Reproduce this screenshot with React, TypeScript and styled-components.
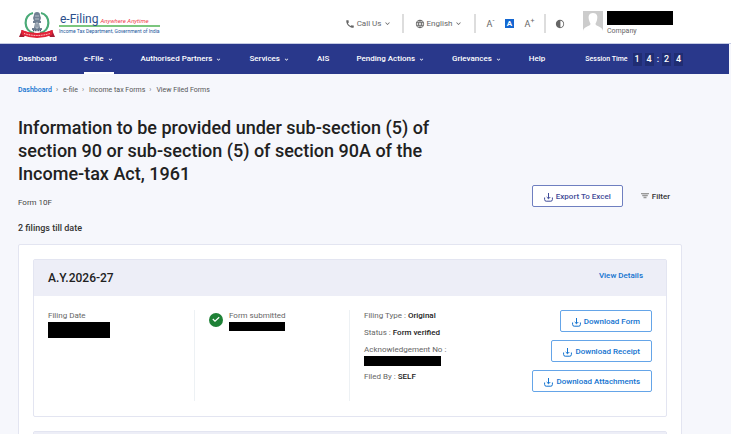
import React from "react";
import styled, { createGlobalStyle } from "styled-components";
import { MdCall, MdContrast, MdExpandMore, MdLanguage } from "react-icons/md";

const GlobalStyle = createGlobalStyle`
  * { box-sizing: border-box; }
  body { margin: 0; background: #f6f7fc; font-family: Roboto, "Liberation Sans", sans-serif; color: #212121; font-size: 8px; line-height: 12px; }
  button { font-family: inherit; cursor: pointer; }
  a { color: inherit; text-decoration: none; }
  h1, h2, p, ul, ol, dl, dd { margin: 0; padding: 0; }
  ul, ol { list-style: none; }
  svg { flex: none; display: block; }
`;

const Page = styled.div`
  min-height: 100vh;
  padding-right: 2px;
  overflow: hidden;
`;

const TopBar = styled.header`
  display: flex;
  align-items: center;
  height: 44px;
  margin-right: -2px;
  padding: 4px 58px 0 18px;
  background: #fff;
  border-bottom: 1px solid #c5cbe3;
`;

const Brand = styled.a`
  display: flex;
  align-items: center;
  gap: 3px;
  margin-right: auto;
`;

const BrandText = styled.span`
  display: flex;
  flex-direction: column;
`;

const BrandName = styled.span`
  display: flex;
  align-items: baseline;
  gap: 2px;
  padding-left: 1px;
  border-bottom: 2px solid #7cc67e;
  color: #2b4f8c;
  font: 12px/12px Roboto, sans-serif;
`;

const Tagline = styled.em`
  color: #f0404c;
  font: italic 6px/8px Roboto, sans-serif;
`;

const Department = styled.span`
  color: #24579b;
  font: 5px/8px Roboto, sans-serif;
  white-space: nowrap;
`;

const Tool = styled.button<{ $width: number }>`
  display: flex;
  align-items: center;
  justify-content: center;
  gap: 2px;
  width: ${(p) => p.$width}px;
  height: 18px;
  padding: 0;
  border: 0;
  background: none;
  color: #666;
  font-size: 8px;
  white-space: nowrap;
`;

const Separator = styled.span<{ $left: number; $right: number }>`
  width: 2px;
  height: 19px;
  margin: 0 ${(p) => p.$right}px 0 ${(p) => p.$left}px;
  background: #ddd;
`;

const SizeTool = styled(Tool)`
  gap: 0;
  font-size: 9px;
  sup { font-size: 7px; line-height: 7px; margin-bottom: 4px; vertical-align: 0; }
`;

const ActiveSize = styled.span`
  width: 9px;
  height: 9px;
  background: #1467d1;
  color: #fff;
  font: bold 8px/9px Roboto, sans-serif;
`;

const Account = styled.div`
  display: flex;
  gap: 4px;
  margin-left: 18px;
`;

const AccountText = styled.div`
  display: flex;
  flex-direction: column;
  color: #666;
  font-size: 7px;
`;

const Redacted = styled.span<{ $width: number; $height: number }>`
  display: block;
  width: ${(p) => p.$width}px;
  height: ${(p) => p.$height}px;
  background: #000;
`;

const NavBar = styled.nav`
  display: flex;
  align-items: center;
  justify-content: space-between;
  height: 30px;
  padding: 0 46px 0 18px;
  background: #29388b;
  color: #fff;
  font-weight: 500;
`;

const NavList = styled.ul`
  display: flex;
  gap: 27px;
`;

const NavLink = styled.a<{ $active?: boolean }>`
  display: flex;
  align-items: center;
  gap: 3px;
  height: 30px;
  padding-top: 2px;
  border-bottom: 2px solid ${(p) => (p.$active ? "#fff" : "transparent")};
  white-space: nowrap;
`;

const Session = styled.div`
  display: flex;
  align-items: center;
  gap: 4px;
  font-size: 7px;
  white-space: nowrap;
`;

const Timer = styled.span`
  display: flex;
  gap: 3px;
  margin-left: 1px;
  font: 500 9px/13px Roboto, sans-serif;
`;

const Digit = styled.span`
  width: 9px;
  background: #202d73;
  text-align: center;
`;

const Main = styled.main`
  padding: 10px 47px 0 18px;
`;

const Crumbs = styled.ol`
  display: flex;
  gap: 5px;
  font-size: 7px;
  color: #555;
`;

const Crumb = styled.li`
  display: flex;
  gap: 4px;
  &:not(:last-child)::after { content: "›"; color: #777; }
  &:first-child { color: #1272cf; font-weight: 500; }
`;

const TitleRow = styled.div`
  display: flex;
  justify-content: space-between;
  align-items: flex-end;
  margin-top: 20px;
`;

const Title = styled.h1`
  max-width: 420px;
  font-size: 18px;
  line-height: 23px;
  font-weight: 500;
`;

const FormName = styled.p`
  margin-top: 12px;
  color: #444;
`;

const Count = styled.p`
  margin-top: 13px;
  font-size: 9px;
  font-weight: 500;
  color: #333;
`;

const Actions = styled.div`
  display: flex;
  align-items: center;
  gap: 18px;
  padding: 0 12px 2px 0;
`;

const OutlineButton = styled.button<{ $tone: string; $edge: string }>`
  display: flex;
  align-items: center;
  gap: 3px;
  height: 22px;
  padding: 0 11px;
  border: 1px solid ${(p) => p.$edge};
  border-radius: 2px;
  background: #fff;
  color: ${(p) => p.$tone};
  font-size: 8px;
  font-weight: 500;
  white-space: nowrap;
  svg { margin-top: 3px; }
`;

const FilterButton = styled.button`
  display: flex;
  align-items: center;
  gap: 3px;
  padding: 0;
  border: 0;
  background: none;
  color: #333;
  font-size: 8px;
  font-weight: 500;
`;

const Panel = styled.section`
  display: flex;
  flex-direction: column;
  gap: 14px;
  margin: 10px 0 -40px;
  padding: 14px;
  background: #fff;
  border: 1px solid #e3e5f1;
  border-radius: 2px;
`;

const Card = styled.article`
  border: 1px solid #e3e5f1;
  border-radius: 2px;
`;

const CardHead = styled.div`
  display: flex;
  justify-content: space-between;
  align-items: center;
  height: 36px;
  padding: 0 23px 0 14px;
  background: #edeef7;
`;

const Year = styled.h2`
  font-size: 12px;
  line-height: 16px;
  font-weight: 500;
`;

const DetailsLink = styled.a`
  color: #1272cf;
  font-weight: 500;
  margin-bottom: 4px;
`;

const CardBody = styled.div`
  display: grid;
  grid-template-columns: 147fr 155fr 302fr;
  min-height: 120px;
  padding: 14px 14px 15px;
  color: #666;
`;

const Column = styled.div`
  border-right: 1px solid #edf1f4;
`;

const Submitted = styled(Column)`
  display: flex;
  align-items: flex-start;
  gap: 6px;
  padding-left: 14px;
  svg { margin-top: 3px; }
`;

const Facts = styled.dl`
  display: flex;
  flex-direction: column;
  gap: 5px;
  padding-left: 14px;
`;

const Fact = styled.div`
  display: flex;
  flex-wrap: wrap;
  gap: 2px;
  white-space: nowrap;
  dd { color: #222; font-weight: 500; }
`;

const Outcome = styled.div`
  display: flex;
  justify-content: space-between;
  align-items: flex-start;
`;

const Downloads = styled.div`
  display: flex;
  flex-direction: column;
  align-items: flex-end;
  gap: 8px;
`;

const Emblem = () => (
  <svg width="38" height="30" viewBox="0 0 38 30" aria-hidden="true">
    <path d="M15 4C5 6 5 22 16 24" fill="none" stroke="#4aaa77" strokeWidth="2.2" />
    <path d="M23 4C33 6 33 22 22 24" fill="none" stroke="#4aaa77" strokeWidth="2.2" />
    <path d="M16 6q0-3 3-3t3 3l1 3-1 3h1v2h-2l1 5h2v2H14v-2h2l1-5h-2v-2h1l-1-3z" fill="#718093" />
    <path d="M17 7h4M17 10h4M18 14h2v5h-2z" stroke="#d7dde3" strokeWidth=".7" fill="none" />
    <path d="M15 21.500h8" stroke="#42536d" strokeWidth="1.4" strokeDasharray="1.2 .5" />
    <path d="M1 28l3-7 5 2-3 5zM37 28l-3-7-5 2 3 5z" fill="#a51d35" />
    <path d="M3 21q16 6 32 0l-1 5q-15 6-30 0z" fill="#e32237" />
    <path d="M6 24.500q13 4 26 0" fill="none" stroke="#fff" strokeWidth=".9" strokeDasharray="1 .7" />
  </svg>
);

const Avatar = () => (
  <svg width="20" height="20" viewBox="0 0 20 20" aria-hidden="true">
    <path d="M0 0h20v20H0z" fill="#ccc" />
    <path d="M10 2c4 0 5 3 4 7-.4 2-1.5 3-1.5 4 0 2 7.500 3 7.500 7H0c0-4 7.500-5 7.500-7C7.500 12 6.400 11 6 9c-1-4 0-7 4-7z" fill="#fff" />
  </svg>
);

const DownloadIcon = () => (
  <svg width="9" height="9" viewBox="0 0 9 9" fill="none" stroke="currentColor" aria-hidden="true">
    <path d="M4.500 0v5.500M2.700 4l1.800 1.800L6.300 4" />
    <path d="M.6 4.500v2q0 1.700 1.600 1.700h4.600q1.600 0 1.600-1.700v-2" />
  </svg>
);

const FilterIcon = () => (
  <svg width="8" height="6" viewBox="0 0 8 6" aria-hidden="true">
    <path d="M0 .5h8M1.200 2.500h5.600M2.500 4.500h3" stroke="#999" strokeWidth="1.300" />
  </svg>
);

const CheckIcon = () => (
  <svg width="14" height="14" viewBox="0 0 14 14" aria-hidden="true">
    <circle cx="7" cy="7" r="7" fill="#1e8136" />
    <path d="M3.800 6l2.200 2.200 4.200-4" fill="none" stroke="#fff" strokeWidth="1.200" />
  </svg>
);

const navItems = [
  { label: "Dashboard" },
  { label: "e-File", menu: true, active: true },
  { label: "Authorised Partners", menu: true },
  { label: "Services", menu: true },
  { label: "AIS" },
  { label: "Pending Actions", menu: true },
  { label: "Grievances", menu: true },
  { label: "Help" },
];

const crumbs = ["Dashboard", "e-file", "Income tax Forms", "View Filed Forms"];
const downloads = ["Download Form", "Download Receipt", "Download Attachments"];

export default function App() {
  return (
    <Page>
      <GlobalStyle />
      <TopBar>
        <Brand href="#">
          <Emblem />
          <BrandText>
            <BrandName>e-Filing <Tagline>Anywhere Anytime</Tagline></BrandName>
            <Department>Income Tax Department, Government of India</Department>
          </BrandText>
        </Brand>
        <Tool $width={49}><MdCall size={10} />Call Us <MdExpandMore size={9} /></Tool>
        <Separator $left={9} $right={10} />
        <Tool $width={50}><MdLanguage size={10} />English <MdExpandMore size={9} /></Tool>
        <Separator $left={10} $right={8} />
        <SizeTool $width={13} aria-label="Decrease text size">A<sup>-</sup></SizeTool>
        <Tool $width={25} aria-label="Normal text size"><ActiveSize>A</ActiveSize></Tool>
        <SizeTool $width={15} aria-label="Increase text size">A<sup>+</sup></SizeTool>
        <Separator $left={7} $right={9} />
        <Tool $width={10} aria-label="Contrast"><MdContrast size={10} /></Tool>
        <Account>
          <Avatar />
          <AccountText>
            <Redacted $width={66} $height={14} />
            <span>Company</span>
          </AccountText>
        </Account>
      </TopBar>
      <NavBar>
        <NavList>
          {navItems.map((item) => (
            <li key={item.label}>
              <NavLink href="#" $active={item.active}>
                {item.label}
                {item.menu && <MdExpandMore size={7} />}
              </NavLink>
            </li>
          ))}
        </NavList>
        <Session>
          Session Time
          <Timer><Digit>1</Digit><Digit>4</Digit>:<Digit>2</Digit><Digit>4</Digit></Timer>
        </Session>
      </NavBar>
      <Main>
        <Crumbs>
          {crumbs.map((c) => <Crumb key={c}><a href="#">{c}</a></Crumb>)}
        </Crumbs>
        <TitleRow>
          <div>
            <Title>Information to be provided under sub-section (5) of section 90 or sub-section (5) of section 90A of the Income-tax Act, 1961</Title>
            <FormName>Form 10F</FormName>
          </div>
          <Actions>
            <OutlineButton $tone="#3f4b98" $edge="#6f7fc0"><DownloadIcon />Export To Excel</OutlineButton>
            <FilterButton><FilterIcon />Filter</FilterButton>
          </Actions>
        </TitleRow>
        <Count>2 filings till date</Count>
        <Panel>
          <Card>
            <CardHead>
              <Year>A.Y.2026-27</Year>
              <DetailsLink href="#">View Details</DetailsLink>
            </CardHead>
            <CardBody>
              <Column>
                Filing Date
                <Redacted $width={62} $height={16} />
              </Column>
              <Submitted>
                <CheckIcon />
                <div>
                  Form submitted
                  <Redacted $width={56} $height={9} />
                </div>
              </Submitted>
              <Outcome>
                <Facts>
                  <Fact><dt>Filing Type :</dt><dd>Original</dd></Fact>
                  <Fact><dt>Status :</dt><dd>Form verified</dd></Fact>
                  <div>
                    <dt>Acknowledgement No :</dt>
                    <dd><Redacted $width={77} $height={10} /></dd>
                  </div>
                  <Fact><dt>Filed By :</dt><dd>SELF</dd></Fact>
                </Facts>
                <Downloads>
                  {downloads.map((d) => (
                    <OutlineButton key={d} $tone="#1272cf" $edge="#65a5e8"><DownloadIcon />{d}</OutlineButton>
                  ))}
                </Downloads>
              </Outcome>
            </CardBody>
          </Card>
          <Card><CardHead /></Card>
        </Panel>
      </Main>
    </Page>
  );
}
